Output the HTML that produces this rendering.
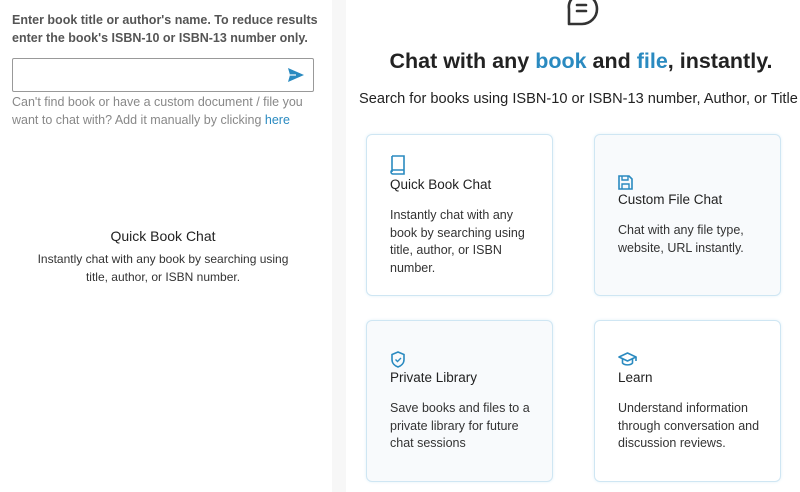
<!DOCTYPE html>
<html><head><meta charset="utf-8"><style>
*{box-sizing:border-box;margin:0;padding:0}
body{width:800px;height:492px;overflow:hidden;background:#fff;font-family:"Liberation Sans",sans-serif;position:relative;color:#333}
.sep{position:absolute;left:332px;top:0;width:14px;height:492px;background:#f7f7f7}
.lab{position:absolute;left:12px;top:11px;font-size:12.5px;font-weight:bold;color:#555;line-height:18px;width:310px}
.inp{position:absolute;left:12px;top:58px;width:302px;height:34px;border:1px solid #999;border-radius:2px}
.help{position:absolute;left:12px;top:93px;font-size:12.5px;color:#888;line-height:18px;width:310px}
.help a{color:#2a8ac0;text-decoration:none}
.qt{position:absolute;left:0;width:326px;text-align:center;top:228px;font-size:14px;color:#222}
.qd{position:absolute;left:36px;width:254px;text-align:center;top:250px;font-size:12px;color:#333;line-height:18px}
h1{position:absolute;left:346px;width:470px;text-align:center;top:49px;font-size:21.5px;color:#222;font-weight:bold}
h1 span{color:#2a8ac0}
.sub{position:absolute;left:359px;top:91px;font-size:14.6px;color:#222;white-space:nowrap}
.card{position:absolute;width:187px;height:162px;border:1px solid #cfe6f3;border-radius:6px;background:#fff;box-shadow:0 0 3px #e3f1f9}
.card.g{background:#f8fafc}
.card svg{position:absolute;left:23px}
.card .t{position:absolute;left:23px;font-size:13.5px;color:#222}
.card .d{position:absolute;left:23px;font-size:12.5px;color:#333;line-height:17.5px;width:140px}
</style></head><body>
<div class="sep"></div>
<div class="lab">Enter book title or author's name. To reduce results enter the book's ISBN-10 or ISBN-13 number only.</div>
<div class="inp"><svg style="position:absolute;left:275px;top:9px" width="16" height="14" viewBox="0 0 16 14"><path d="M0 0L16 7L0 14L2 7Z" fill="#2a8ac0"/><path d="M2 7H8" stroke="#fff" stroke-width="1.2"/></svg></div>
<div class="help">Can't find book or have a custom document / file you want to chat with? Add it manually by clicking <a>here</a></div>
<div class="qt">Quick Book Chat</div>
<div class="qd">Instantly chat with any book by searching using title, author, or ISBN number.</div>
<svg style="position:absolute;left:565px;top:-8px" width="34" height="36" viewBox="0 0 34 36"><path d="M17 2a15 15 0 0 1 0 30H4V17A13 13 0 0 1 17 2z" fill="none" stroke="#333" stroke-width="2.6" stroke-linejoin="round"/><path d="M12 13h9M12 19h9" stroke="#333" stroke-width="2.6" stroke-linecap="round"/></svg>
<h1>Chat with any <span>book</span> and <span>file</span>, instantly.</h1>
<div class="sub">Search for books using ISBN-10 or ISBN-13 number, Author, or Title</div>

<div class="card" style="left:366px;top:134px">
<svg style="top:20px" width="16" height="20" viewBox="0 0 16 20"><path d="M2 1h12v14H3a1.5 1.5 0 0 0 0 4h11v-4M2 1v16" fill="none" stroke="#2a8ac0" stroke-width="1.6"/></svg>
<div class="t" style="top:42px">Quick Book Chat</div>
<div class="d" style="top:72px">Instantly chat with any book by searching using title, author, or ISBN number.</div></div>

<div class="card g" style="left:594px;top:134px">
<svg style="top:40px" width="15" height="15" viewBox="0 0 15 15"><path d="M1 1h10l3 3v10H1z" fill="none" stroke="#2a8ac0" stroke-width="1.6"/><path d="M4 1v4h6V1M4 14V9h7v5" fill="none" stroke="#2a8ac0" stroke-width="1.4"/></svg>
<div class="t" style="top:57px">Custom File Chat</div>
<div class="d" style="top:87px">Chat with any file type, website, URL instantly.</div></div>

<div class="card g" style="left:366px;top:320px">
<svg style="top:30px" width="16" height="17" viewBox="0 0 16 17"><path d="M8 1l6 2.5v5c0 4-3 6.5-6 7.5C5 15 2 12.5 2 8.5v-5z" fill="none" stroke="#2a8ac0" stroke-width="1.6"/><path d="M5.5 8.5l2 2 3.5-3.5" fill="none" stroke="#2a8ac0" stroke-width="1.4"/></svg>
<div class="t" style="top:49px">Private Library</div>
<div class="d" style="top:79px">Save books and files to a private library for future chat sessions</div></div>

<div class="card" style="left:594px;top:320px">
<svg style="top:31px" width="19" height="15" viewBox="0 0 19 15"><path d="M9.5 1L18 5l-8.5 4L1 5z" fill="none" stroke="#2a8ac0" stroke-width="1.6" stroke-linejoin="round"/><path d="M4.5 7v4c2 2.5 8 2.5 10 0V7M18 5v4" fill="none" stroke="#2a8ac0" stroke-width="1.6"/></svg>
<div class="t" style="top:49px">Learn</div>
<div class="d" style="top:79px;width:150px">Understand information through conversation and discussion reviews.</div></div>
</body></html>
